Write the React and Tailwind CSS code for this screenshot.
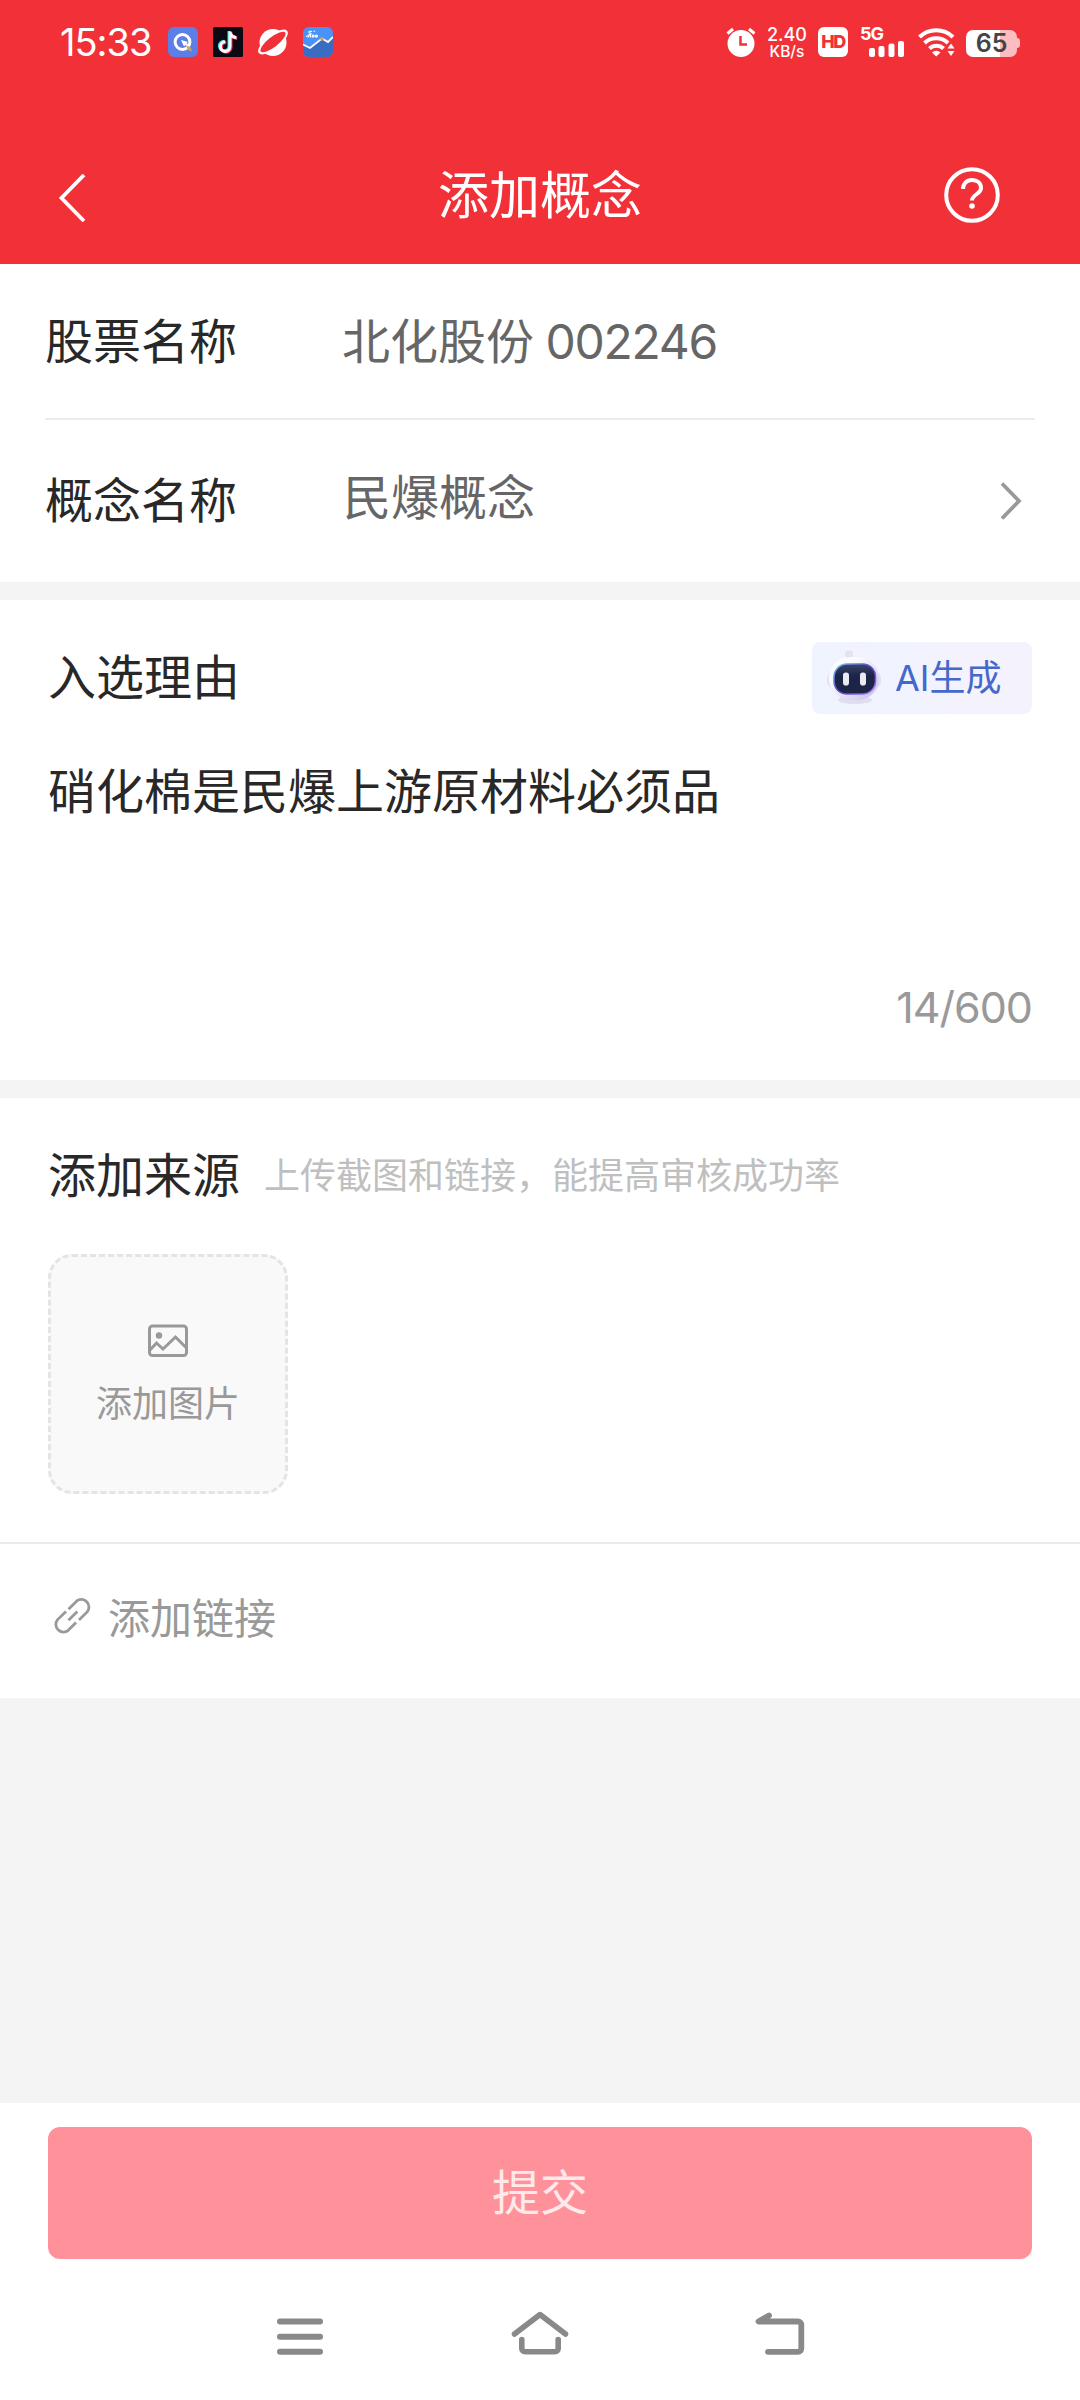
import { useState } from "react";

const AppIcons = () => (
  <div className="flex items-center gap-[15px]">
    <svg width="30" height="30" viewBox="0 0 30 30">
      <rect width="30" height="30" rx="6" fill="#5b7fe6" />
      <circle cx="14.5" cy="15" r="7.4" fill="none" stroke="#fff" strokeWidth="3" />
      <path d="M13 13l3 6.500 1.500-1.500 3.500 3.500 1-2-3.500-3.500 1.500-1z" fill="#fff" />
      <path d="M18 18.500l4.500 1.500 1.500 4.500-4-1.500z" fill="#cfa45c" />
    </svg>
    <svg width="30" height="30" viewBox="0 0 30 30">
      <rect width="30" height="30" rx="1.5" fill="#0b0a14" />
      <g fill="none" strokeWidth="3">
        <path d="M16 4v15a4.800 4.800 0 1 1-4.800-4.800M16 4.400c.4 3.200 2.600 5.200 6.200 5.600" stroke="#25e5e0" />
        <path d="M18 5.400v15a4.800 4.800 0 1 1-4.800-4.800M18 5.800c.4 3.200 2.600 5.200 6.200 5.600" stroke="#fb2c55" />
        <path d="M17 4.600v15a4.800 4.800 0 1 1-4.800-4.800M17 5c.4 3.200 2.600 5.400 6.400 5.600" stroke="#fff" />
      </g>
    </svg>
    <svg width="30" height="30" viewBox="0 0 30 30">
      <circle cx="15" cy="15.5" r="13.500" fill="#fff" />
      <ellipse cx="15" cy="15" rx="18" ry="7" transform="rotate(-38 15 15)" fill="#fff" />
      <ellipse cx="15" cy="15" rx="15.500" ry="5" transform="rotate(-38 15 15)" fill="#f23037" />
    </svg>
    <svg width="30" height="30" viewBox="0 0 30 30">
      <rect width="30" height="30" rx="6" fill="#4a92f5" />
      <path d="M0 18l7 3 12-9 6 3 5-5v14a6 6 0 0 1-6 6H6a6 6 0 0 1-6-6z" fill="#3a6cc4" />
      <path d="M0 17.500l7 3.500 12-9.500 6 3.500 5-5" fill="none" stroke="#fff" strokeWidth="1.800" />
      <circle cx="19" cy="12" r="1.800" fill="#d9a04e" />
      <path
        d="M9 4.500c-3-1-4 1-2 1.500s1 2-1.500 1.500M3 9.500l3-1-1 2M8 8l-1 2.500M9 10.500l.8-2.500 1.200.5-.6 2M14 8c-2 0-2.500 2-1 2s1.500-1 1.500-2l-.5 2.500M10.500 4l1.500.5"
        fill="none"
        stroke="#fff"
        strokeWidth="1.100"
      />
    </svg>
  </div>
);

const StatusBar = () => (
  <div className="flex h-[84px] items-center justify-between px-[60px] text-white">
    <div className="flex items-center gap-4">
      <span className="w-[92px] text-[38px] leading-[40px] tracking-[-1px]">15:33</span>
      <AppIcons />
    </div>
    <div className="flex items-center">
      <svg width="30" height="30" viewBox="0 0 30 30" className="mr-[11px]">
        <circle cx="15" cy="16.500" r="13.500" fill="#fff" />
        <path d="M1.500 6.500L7 2M28.500 6.500L23 2" stroke="#fff" strokeWidth="3" />
        <path d="M14.500 9v8.500H21" fill="none" stroke="#f23037" strokeWidth="2.500" />
      </svg>
      <div className="mr-[11px] flex w-10 flex-col items-center pt-[1px] font-medium">
        <span className="text-[18px] leading-[17px]">2.40</span>
        <span className="text-[15.5px] leading-[17px]">KB/s</span>
      </div>
      <div className="mr-3 flex h-[30px] w-[30px] items-center justify-center rounded-[6px] bg-white text-[18px] leading-none font-extrabold tracking-[-1.5px] text-[#f23037]">
        HD
      </div>
      <div className="mr-[13px] flex h-[30px] w-[45px] flex-col">
        <span className="text-[18px] leading-[14px] font-bold tracking-[-1px]">5G</span>
        <svg width="45" height="16" viewBox="0 0 45 16" fill="#fff">
          <rect x="9" y="7" width="6" height="9" rx="2" />
          <rect x="18.500" y="5" width="6" height="11" rx="2" />
          <rect x="28.500" y="2.500" width="6" height="13.500" rx="2" />
          <rect x="38" y="0" width="6" height="16" rx="2" />
        </svg>
      </div>
      <svg width="37" height="30" viewBox="0 0 37 30" className="mr-[11px]">
        <g fill="none" stroke="#fff" strokeWidth="4">
          <path d="M1.500 10a24 24 0 0 1 33.500 0" />
          <path d="M6.500 16a17 17 0 0 1 23.500 0" />
          <path d="M11.500 21.500a10 10 0 0 1 14 0" />
        </g>
        <path d="M14 25.500a6 6 0 0 1 8.500 0L18.200 29.500z" fill="#fff" />
        <path d="M29.500 21.500h7L33 16.500zM29.500 24h7L33 29z" fill="#fff" />
      </svg>
      <div className="flex items-center pt-[2px]">
        <div className="flex h-[27px] w-[51px] items-center justify-center rounded-[7px] bg-linear-to-r from-white from-67% to-[#fdbcbf] to-67% text-[25px] leading-none font-semibold text-[#444]">
          65
        </div>
        <div className="h-[10px] w-[3px] rounded-r-[3px] bg-[#fdbcbf]" />
      </div>
    </div>
  </div>
);

const Header = () => (
  <header className="h-[264px] bg-[#f23037] text-white">
    <StatusBar />
    <div className="flex h-[180px] items-center justify-between pt-[42px] pr-[80px] pl-[58px]">
      <button type="button" aria-label="返回" className="pt-[6px]">
        <svg width="56" height="48" viewBox="0 0 56 48" fill="none" stroke="#fff" strokeWidth="3.800">
          <path d="M26 1L3.500 24 26 47" />
        </svg>
      </button>
      <h1 className="ml-[22px] pt-[2px] text-[51px] leading-[56px]">添加概念</h1>
      <button type="button" aria-label="帮助">
        <svg width="56" height="56" viewBox="0 0 56 56" fill="none" stroke="#fff" strokeWidth="4">
          <circle cx="28" cy="28" r="25.800" />
          <path d="M19 22c0-5 3.500-9 9-9s9 3.500 9 8c0 6-9 6.500-9 12.500" />
          <circle cx="28" cy="39" r="2.800" fill="#fff" stroke="none" />
        </svg>
      </button>
    </div>
  </header>
);

const Robot = () => (
  <svg width="58" height="58" viewBox="0 0 58 58">
    <defs>
      <linearGradient id="shell" x1="0" y1="0" x2="1" y2="1">
        <stop offset="0.3" stopColor="#fbfbff" />
        <stop offset="1" stopColor="#c3bdec" />
      </linearGradient>
      <linearGradient id="rim" x1="0" y1="0" x2="1" y2="1">
        <stop offset="0" stopColor="#74c8e8" />
        <stop offset="0.5" stopColor="#5a3fc0" />
        <stop offset="1" stopColor="#a678f0" />
      </linearGradient>
      <linearGradient id="face" x1="0" y1="0" x2="0" y2="1">
        <stop offset="0" stopColor="#3a4468" />
        <stop offset="0.4" stopColor="#1c2547" />
      </linearGradient>
    </defs>
    <ellipse cx="29" cy="51" rx="17" ry="4" fill="#dedeee" />
    <circle cx="23" cy="5.500" r="4" fill="#e2e2f0" />
    <rect x="1" y="22" width="54" height="18" rx="8" fill="#e2e1f4" />
    <rect x="3" y="8" width="50" height="43" rx="21" fill="url(#shell)" />
    <rect x="8" y="15" width="41.500" height="30" rx="13" fill="url(#face)" stroke="url(#rim)" strokeWidth="1.600" />
    <rect x="17" y="23.500" width="6" height="13" rx="2.800" fill="#e9eaf4" />
    <rect x="34" y="23.500" width="6" height="13" rx="2.800" fill="#e9eaf4" />
  </svg>
);

const StockForm = () => (
  <section className="bg-white px-[45px] text-[48px] leading-[56px]">
    <div className="flex h-[156px] items-center border-b-2 border-[#ebebeb] pt-[2px]">
      <span className="w-[297px] text-[#282828]">股票名称</span>
      <span className="text-[#666]">
        北化股份 <span className="-ml-[2px] tracking-[-1.3px]">002246</span>
      </span>
    </div>
    <div className="flex h-[162px] items-center">
      <span className="w-[298px] text-[#282828]">概念名称</span>
      <span className="flex-1 pb-[6px] text-[#666]">民爆概念</span>
      <svg width="22" height="38" viewBox="0 0 22 38" className="mr-[13px]" fill="none" stroke="#999" strokeWidth="3.800">
        <path d="M2 1.500L19 19 2 36.500" />
      </svg>
    </div>
  </section>
);

const ReasonForm = ({ reason, onChange }) => (
  <section className="mt-[18px] flex h-[480px] flex-col bg-white px-12 pt-[42px]">
    <div className="flex items-center justify-between">
      <h2 className="text-[48px] leading-[56px] text-[#282828]">入选理由</h2>
      <button
        type="button"
        className="flex h-[72px] w-[220px] items-center gap-[11px] rounded-[8px] bg-linear-to-r from-[#eff4ff] to-[#f5f2fd] pl-[14px] text-[36px] leading-[40px] text-[#4468cc]"
      >
        <Robot />
        AI生成
      </button>
    </div>
    <textarea
      value={reason}
      onChange={(e) => onChange(e.target.value)}
      maxLength={600}
      className="mt-[50px] h-[170px] w-full resize-none overflow-hidden text-[48px] leading-[56px] text-[#282828] outline-none"
    />
    <p className="mt-[45px] text-right text-[43px] leading-[56px] tracking-[-1px] text-[#999]">
      {reason.length}/600
    </p>
  </section>
);

const SourceForm = () => (
  <section className="mt-[18px] h-[600px] bg-white">
    <div className="flex h-[444px] flex-col px-12 pt-[50px]">
      <div className="flex items-center gap-6">
        <h2 className="text-[48px] leading-[56px] text-[#282828]">添加来源</h2>
        <span className="text-[36px] leading-[56px] text-[#bfbfbf]">上传截图和链接，能提高审核成功率</span>
      </div>
      <button
        type="button"
        className="mt-[50px] flex h-[240px] w-[240px] flex-col items-center rounded-[24px] border-[3px] border-dashed border-[#e4e4e4] bg-[#f9f9f9] pt-[67px] text-[#999]"
      >
        <svg width="40" height="34" viewBox="0 0 40 34" fill="none" stroke="#999" strokeWidth="3">
          <rect x="1.5" y="2" width="37" height="29.500" rx="3" />
          <path d="M2 26l6.500-7 6.500 6L27.500 13 38 23.500" />
          <circle cx="11" cy="11.500" r="3.200" fill="#999" stroke="none" />
        </svg>
        <span className="mt-[25px] text-[36px] leading-[42px]">添加图片</span>
      </button>
    </div>
    <div className="flex h-[156px] items-center gap-[17px] border-t-2 border-[#ebebeb] pb-[5px] pl-[53px] text-[#999]">
      <svg width="38" height="38" viewBox="0 0 38 38" className="-mt-[7px]" fill="none" stroke="#999" strokeWidth="2.800">
        <path d="M15.500 13.200l8-8a7.600 7.600 0 0 1 10.700 10.700L26 24" />
        <path d="M13 15.500l-8.400 8.100a7.600 7.600 0 0 0 10.700 10.700l7.700-7.800" />
        <path d="M15.500 24.200l8.800-8.800" />
      </svg>
      <span className="text-[42px] leading-[56px]">添加链接</span>
    </div>
  </section>
);

const SystemNav = () => (
  <nav className="flex justify-center gap-[182px] pt-[50px]">
    <svg width="56" height="48" viewBox="0 0 56 48" fill="none" stroke="#898989" strokeWidth="6" strokeLinecap="round">
      <path d="M8 12.500h40M8 27.700h40M8 42.800h40" />
    </svg>
    <svg width="60" height="48" viewBox="0 0 60 48" fill="none" stroke="#898989" strokeWidth="5.600" strokeLinecap="round" strokeLinejoin="round">
      <path d="M4.500 25L30 5.500 55.500 25" />
      <path d="M11.800 30.500v9a3.300 3.300 0 0 0 3.300 3.300h29.800a3.300 3.300 0 0 0 3.300-3.300v-9" />
    </svg>
    <svg width="56" height="48" viewBox="0 0 56 48" fill="none" stroke="#898989" strokeWidth="5.800" strokeLinecap="round" strokeLinejoin="round">
      <path d="M17 6.500L6.500 12.500H46a3.300 3.300 0 0 1 3.300 3.300v23.700a3.300 3.300 0 0 1-3.300 3.300H16" />
    </svg>
  </nav>
);

export default function App() {
  const [reason, setReason] = useState("硝化棉是民爆上游原材料必须品");

  return (
    <div className="flex h-[2400px] w-[1080px] flex-col overflow-hidden bg-[#f4f4f4] font-['Inter','Noto_Sans_CJK_SC',sans-serif]">
      <Header />
      <StockForm />
      <ReasonForm reason={reason} onChange={setReason} />
      <SourceForm />
      <footer className="mt-auto h-[297px] bg-white px-12 pt-6">
        <button
          type="button"
          className="h-[132px] w-full rounded-[12px] bg-[#ff919b] text-[48px] leading-[56px] text-[#ffe9eb]"
        >
          提交
        </button>
        <SystemNav />
      </footer>
    </div>
  );
}
